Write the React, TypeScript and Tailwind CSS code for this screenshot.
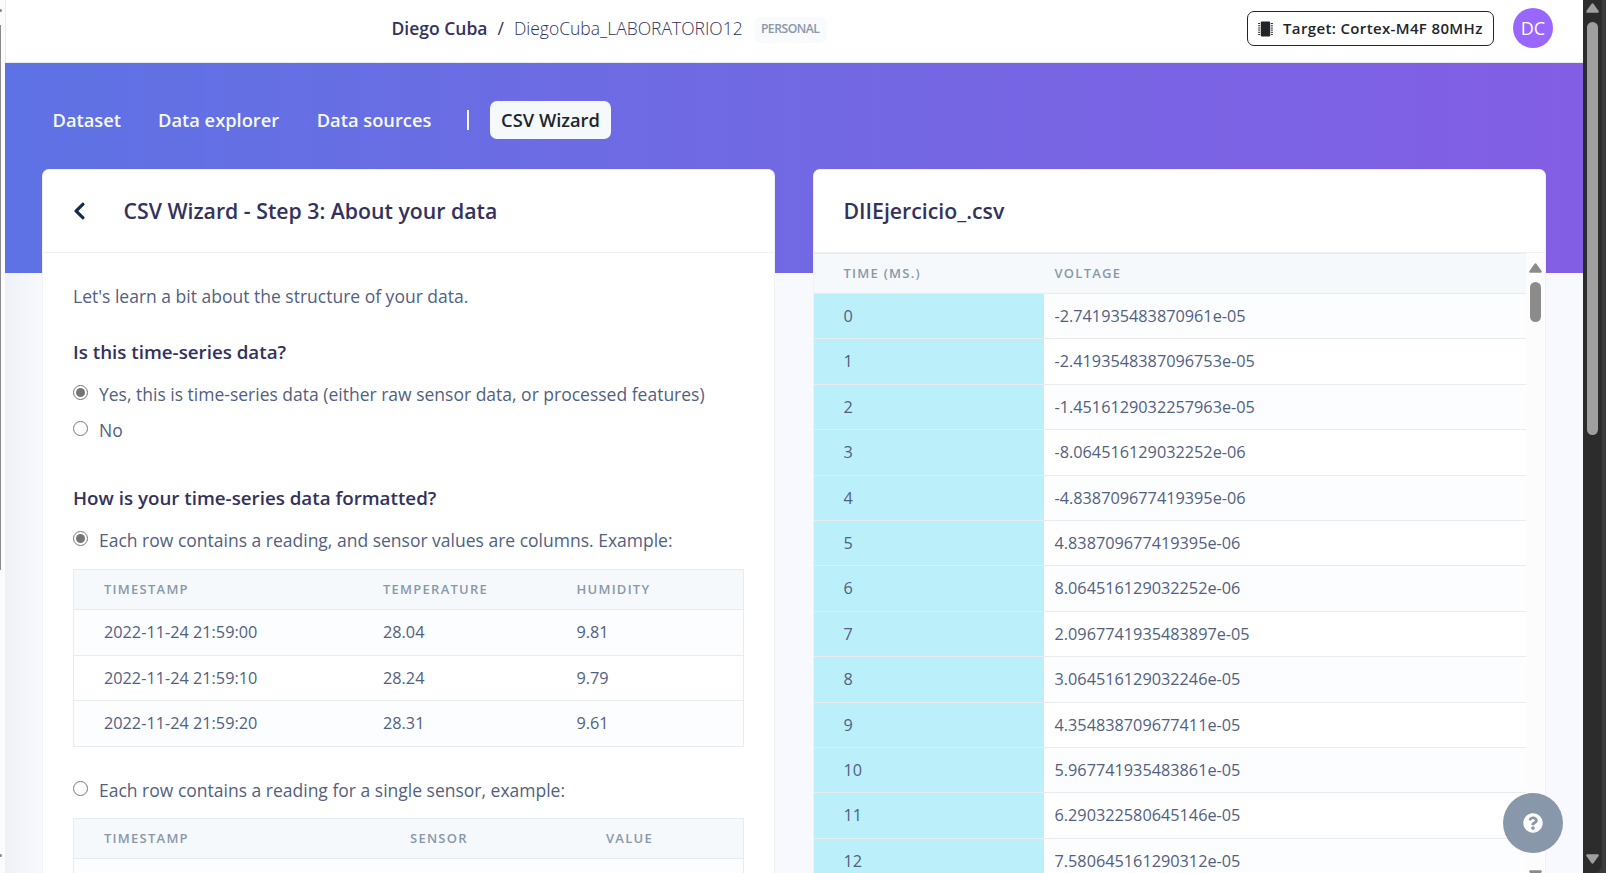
import { FaChevronLeft, FaQuestionCircle } from "react-icons/fa";

const readings = [
  "-2.741935483870961e-05",
  "-2.4193548387096753e-05",
  "-1.4516129032257963e-05",
  "-8.064516129032252e-06",
  "-4.838709677419395e-06",
  "4.838709677419395e-06",
  "8.064516129032252e-06",
  "2.0967741935483897e-05",
  "3.064516129032246e-05",
  "4.354838709677411e-05",
  "5.967741935483861e-05",
  "6.290322580645146e-05",
  "7.580645161290312e-05",
];

const samples = [
  ["2022-11-24 21:59:00", "28.04", "9.81"],
  ["2022-11-24 21:59:10", "28.24", "9.79"],
  ["2022-11-24 21:59:20", "28.31", "9.61"],
];

function Arrow({ down, className }: { down?: boolean; className: string }) {
  return (
    <svg viewBox="0 0 13 10" className={className} fill="currentColor">
      <path
        d="M5.4 0.9 Q6.5 -0.5 7.6 0.9 L12.6 8 Q13.3 9.7 11.6 9.8 L1.4 9.8 Q-0.3 9.7 0.4 8 Z"
        transform={down ? "rotate(180 6.5 5)" : undefined}
      />
    </svg>
  );
}

function ChipIcon() {
  const pins = [2, 4.2, 6.4, 8.6, 10.8, 13];
  return (
    <svg viewBox="0 0 15 16" className="mt-px h-4 w-[15px] shrink-0" fill="currentColor">
      <rect x="2.8" y="0.5" width="9.4" height="15" rx="1" />
      {pins.map((y) => (
        <g key={y}>
          <rect x="0" y={y} width="2.2" height="1" rx="0.4" />
          <rect x="12.8" y={y} width="2.2" height="1" rx="0.4" />
        </g>
      ))}
    </svg>
  );
}

function Radio({ label, checked }: { label: string; checked?: boolean }) {
  return (
    <label className="flex h-9 items-center">
      <span className="mb-[3px] flex size-[15px] shrink-0 items-center justify-center rounded-full border border-[#767676] bg-white">
        {checked && <span className="size-[9px] rounded-full bg-[#767676]" />}
      </span>
      <span className="mt-px ml-[11px] text-[17.5px] whitespace-nowrap text-[#525f7f]">{label}</span>
    </label>
  );
}

const headCell = "text-[13px] font-semibold tracking-[1.25px] text-[#8898aa]";

export default function App() {
  return (
    <div className="flex h-[873px] w-[1606px] overflow-hidden bg-white font-['Open_Sans',sans-serif]">
      <div className="relative w-[5px] shrink-0 overflow-hidden bg-[#fcfcfc]">
        <div className="absolute top-[9px] left-0 h-[3px] w-[2px] rounded-r bg-[#8b8b8b]" />
        <div className="absolute top-[25px] left-0 h-[545px] w-px bg-[#8b8b8b]" />
        <div className="absolute top-[854px] left-0 h-[3px] w-[2px] rounded-r bg-[#8b8b8b]" />
      </div>

      <div className="flex w-[1578px] shrink-0 flex-col bg-[#f8f9fe]">
        <header className="flex h-[63px] shrink-0 items-center border-b border-l border-[#e9ecef] bg-white pb-[6px] text-[#32325d]">
          <div className="flex w-[855px] shrink-0 items-center pl-[385.5px] text-[17.5px] whitespace-nowrap">
            <span className="font-semibold">Diego Cuba</span>
            <span className="ml-[10px]">/</span>
            <span className="ml-[10px] font-light">DiegoCuba_LABORATORIO12</span>
            <span className="mt-[3px] ml-[11px] flex h-[26px] w-[73px] items-center justify-center rounded-[7px] bg-[#f8fafb] text-[12.2px] font-semibold tracking-[-0.5px] text-[#8898aa]">
              PERSONAL
            </span>
          </div>
          <div className="ml-auto flex h-[35px] w-[247px] items-center rounded-[7px] border border-[#212529] pl-[10px] text-[#212529]">
            <ChipIcon />
            <span className="mt-px ml-[10px] text-[15px] font-semibold tracking-[0.36px] whitespace-nowrap">
              Target: Cortex-M4F 80MHz
            </span>
          </div>
          <div className="mr-[30px] ml-[19px] flex size-10 items-center justify-center rounded-full bg-[#9966ff] text-[18px] text-white">
            DC
          </div>
        </header>

        <div className="h-[210px] shrink-0 bg-gradient-to-r from-[#5e72e4] to-[#825ee4]">
          <nav className="flex h-[106px] items-center pt-[8px] pl-[47.5px] text-[18.3px] font-semibold whitespace-nowrap text-[#f6f9fc]">
            <span>Dataset</span>
            <span className="ml-[37px]">Data explorer</span>
            <span className="ml-[37.5px]">Data sources</span>
            <span className="ml-[36px] h-5 w-[2px] bg-[#f6f9fc]" />
            <span className="ml-auto flex h-[38px] w-[121px] items-center justify-center rounded-[7px] bg-[#f6f9fc] text-[#212529]">
              CSV Wizard
            </span>
            <span className="w-[972px] shrink-0" />
          </nav>
        </div>

        <main className="relative -mt-[104px] flex h-[704px] shrink-0 gap-[38px] pl-[37px]">
          <div className="absolute top-[104px] left-0 h-[600px] w-[37px] bg-gradient-to-r from-[#f0f1f6] to-[#f8f9fe]" />
          <section className="relative w-[733px] shrink-0 overflow-hidden rounded-t-[7px] border border-b-0 border-[#f0f1f3] bg-white">
            <div className="flex h-[83px] items-center border-b border-[#f0f0f2] pl-[30px]">
              <FaChevronLeft className="size-5 -translate-x-[3.5px] text-[#172b4d]" />
              <h1 className="ml-[30.5px] text-[21.25px] font-semibold whitespace-nowrap text-[#32325d]">
                CSV Wizard - Step 3: About your data
              </h1>
            </div>
            <div className="px-[30px]">
              <p className="mt-[29px] flex h-7 items-center text-[17.5px] whitespace-nowrap text-[#525f7f]">
                Let's learn a bit about the structure of your data.
              </p>
              <h2 className="mt-[28px] mb-[10px] flex h-7 items-center text-[18.75px] font-semibold whitespace-nowrap text-[#32325d]">
                Is this time-series data?
              </h2>
              <Radio checked label="Yes, this is time-series data (either raw sensor data, or processed features)" />
              <Radio label="No" />
              <h2 className="mt-[36px] mb-[10px] flex h-7 items-center text-[18.75px] font-semibold whitespace-nowrap text-[#32325d]">
                How is your time-series data formatted?
              </h2>
              <Radio checked label="Each row contains a reading, and sensor values are columns. Example:" />
              <div className="mt-[11px] border border-[#e9ecef]">
                <div className={`grid h-[39px] grid-cols-[279px_193.5px_1fr] items-center bg-[#f6f9fc] pl-[30px] ${headCell}`}>
                  <span>TIMESTAMP</span>
                  <span>TEMPERATURE</span>
                  <span>HUMIDITY</span>
                </div>
                {samples.map((row, i) => (
                  <div
                    key={row[0]}
                    className={`grid h-[45.6px] grid-cols-[279px_193.5px_1fr] items-center border-t border-[#e9ecef] pl-[30px] text-[16.25px] text-[#525f7f] ${i % 2 === 0 ? "bg-[#fcfdff]" : "bg-white"}`}
                  >
                    {row.map((cell) => (
                      <span key={cell}>{cell}</span>
                    ))}
                  </div>
                ))}
              </div>
              <div className="mt-[25px]">
                <Radio label="Each row contains a reading for a single sensor, example:" />
              </div>
              <div className="mt-[10px] h-[90px] border border-[#e9ecef]">
                <div className={`grid h-[39px] grid-cols-[306px_196px_1fr] items-center bg-[#f6f9fc] pl-[30px] ${headCell}`}>
                  <span>TIMESTAMP</span>
                  <span>SENSOR</span>
                  <span>VALUE</span>
                </div>
                <div className="h-[45px] border-t border-[#e9ecef] bg-[#fcfdff]" />
              </div>
            </div>
          </section>

          <section className="flex w-[733px] shrink-0 flex-col overflow-hidden rounded-t-[7px] border border-b-0 border-[#f0f1f3] bg-white">
            <div className="flex h-[83px] shrink-0 items-center border-b border-[#f0f0f2] pl-[29.5px]">
              <h1 className="text-[21.25px] font-semibold text-[#32325d]">DIIEjercicio_.csv</h1>
            </div>
            <div className="flex h-[620px] shrink-0">
              <div className="w-[712px] shrink-0">
                <div className={`grid h-[40px] grid-cols-[211px_1fr] items-center border-t border-[#e9ecef] bg-[#f6f9fc] pl-[29.5px] ${headCell}`}>
                  <span>TIME (MS.)</span>
                  <span>VOLTAGE</span>
                </div>
                {readings.map((value, i) => (
                  <div
                    key={value}
                    className={`grid h-[45.4px] grid-cols-[230px_1fr] border-t border-[#e9ecef] text-[16.25px] text-[#525f7f] ${i % 2 === 0 ? "bg-[#fcfdff]" : "bg-white"}`}
                  >
                    <span className="flex items-center bg-[#bbf0fb] pl-[29.5px]">{i}</span>
                    <span className="flex items-center pl-[10.5px]">{value}</span>
                  </div>
                ))}
              </div>
              <div className="flex flex-1 flex-col items-center bg-[#fcfcfc] pt-[10px] text-[#8b8b8b]">
                <Arrow className="h-[10px] w-[13px] shrink-0" />
                <div className="mt-[9px] h-[40px] w-[11px] shrink-0 rounded-full bg-[#8b8b8b]" />
                <Arrow down className="mt-[548px] h-[10px] w-[13px] shrink-0" />
              </div>
            </div>
          </section>
        </main>
      </div>

      <div className="flex flex-1 bg-[#3b3b3b]">
        <div className="flex w-[19px] flex-col items-center rounded-br-[8px] bg-[#2c2c2c] pt-[3px] text-[#9f9f9f]">
          <Arrow className="h-[10px] w-[13px]" />
          <div className="mt-[9px] h-[413px] w-[11px] rounded-full bg-[#9f9f9f]" />
          <Arrow down className="mt-[419px] h-[10px] w-[13px]" />
        </div>
      </div>

      <div className="absolute top-[793px] left-[1503px] flex size-[60px] items-center justify-center rounded-full bg-[#8898aa]">
        <FaQuestionCircle className="size-5 text-white" />
      </div>
    </div>
  );
}
